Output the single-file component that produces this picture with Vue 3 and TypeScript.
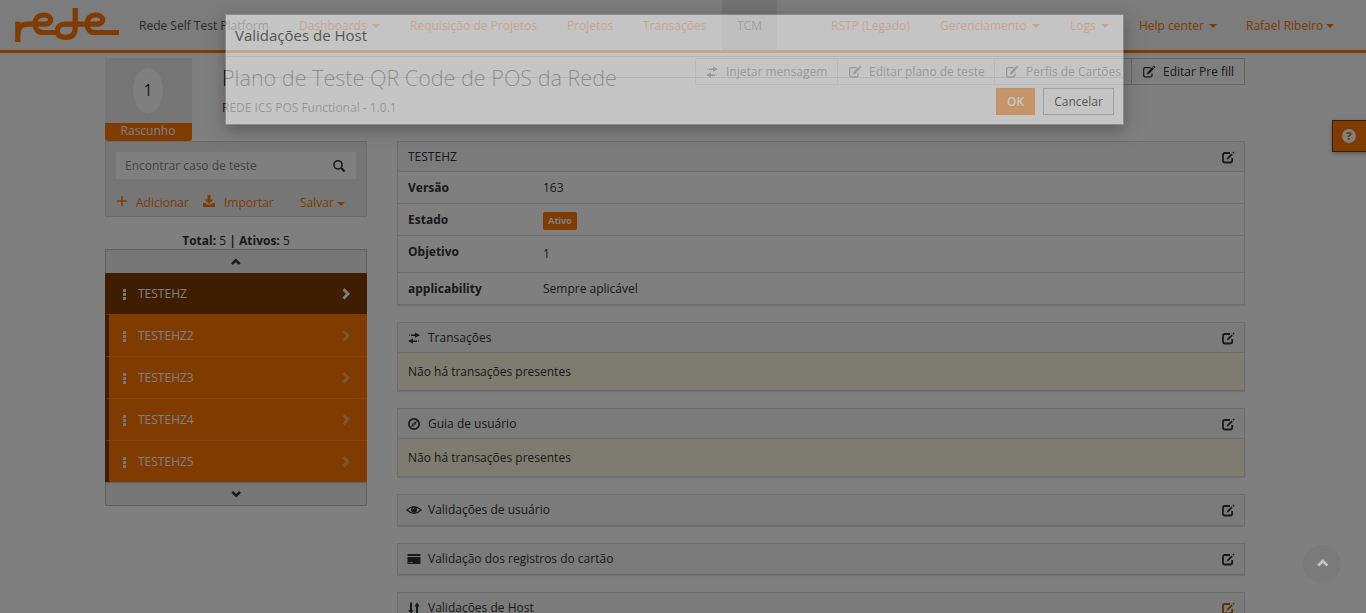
<script setup lang="ts">
interface NavItem { label: string; cls: string; caret?: boolean }
const nav: NavItem[] = [
  { label: 'Dashboards', cls: 'n-dash', caret: true },
  { label: 'Requisição de Projetos', cls: 'n-req' },
  { label: 'Projetos', cls: 'n-proj' },
  { label: 'Transações', cls: 'n-trans' },
  { label: 'TCM', cls: 'n-tcm active' },
  { label: 'RSTP (Legado)', cls: 'n-rstp' },
  { label: 'Gerenciamento', cls: 'n-ger', caret: true },
  { label: 'Logs', cls: 'n-logs', caret: true },
  { label: 'Help center', cls: 'n-help', caret: true },
  { label: 'Rafael Ribeiro', cls: 'n-user', caret: true },
]
const cases: string[] = ['TESTEHZ', 'TESTEHZ2', 'TESTEHZ3', 'TESTEHZ4', 'TESTEHZ5']
const actions: string[] = ['Injetar mensagem', 'Editar plano de teste', 'Perfis de Cartões', 'Editar Pre fill']
interface Section { title: string; icon: string; empty?: string; hot?: boolean }
const sections: Section[] = [
  { title: 'Transações', icon: 'transfer', empty: 'Não há transações presentes' },
  { title: 'Guia de usuário', icon: 'compass', empty: 'Não há transações presentes' },
  { title: 'Validações de usuário', icon: 'eye' },
  { title: 'Validação dos registros do cartão', icon: 'card' },
  { title: 'Validações de Host', icon: 'sort', hot: true },
]
</script>

<template>
  <div class="screen">
    <svg class="defs" width="0" height="0" aria-hidden="true">
      <symbol id="i-edit" viewBox="0 0 14 14">
        <path d="M8.500 2.600H3Q1.700 2.600 1.700 4v6.400q0 1.400 1.300 1.400h5.600q1.400 0 1.400-1.400V8.400" fill="none" stroke="currentColor" stroke-width="1.200" />
        <path d="M5 9.400l.6-2.400L10.300 2.100l1.700 1.700L7.300 8.700zM10.900 1.500l.7-.7q.4-.3.8 0l.9.9q.3.4 0 .8l-.7.700z" fill="currentColor" />
      </symbol>
      <symbol id="i-check" viewBox="0 0 14 14">
        <path d="M9 2H4Q2 2 2 4v5.500q0 2 2 2h5.200q2 0 2-2V7" fill="none" stroke="currentColor" stroke-width="1.800" />
        <path d="M5.500 8.700L6.500 6.200 10.500 2.400l1.300 1.400L8 7.600zM11.400 1.500l.9-.9 1.300 1.300-.9.900z" fill="currentColor" />
      </symbol>
      <symbol id="i-transfer" viewBox="0 0 14 14">
        <path d="M2 3.600h1.200v1H2zM4 3.500h4V1.600l5 2.600-5 2.600V5H4zM12 9.600h-1.200v1H12zM10 9.500H6V7.400L1 10l5 2.600v-1.700h4z" fill="currentColor" />
      </symbol>
      <symbol id="i-compass" viewBox="0 0 14 14">
        <circle cx="7" cy="7" r="5.200" fill="none" stroke="currentColor" stroke-width="1.700" />
        <path d="M10 4L8.100 8.100 4 10l1.900-4.100zM7 6.200a.8.8 0 1 0 0 1.600.8.8 0 0 0 0-1.600z" fill="currentColor" fill-rule="evenodd" />
      </symbol>
      <symbol id="i-eye" viewBox="0 0 16 14">
        <path d="M1 7Q8 .2 15 7 8 13.800 1 7z" fill="none" stroke="currentColor" stroke-width="1.300" />
        <circle cx="8" cy="6.800" r="3" fill="currentColor" />
        <path d="M6.700 6.500Q6.900 5.200 8 5" fill="none" stroke="#f8f8f8" stroke-width=".8" />
      </symbol>
      <symbol id="i-card" viewBox="0 0 14 14">
        <path d="M.5 2h13v2H.5zM.5 5h13v7H.5z" fill="currentColor" />
        <path d="M1.500 10.500h1M3.500 10.500h2" stroke="#f8f8f8" stroke-width=".9" />
      </symbol>
      <symbol id="i-sort" viewBox="0 0 14 14">
        <path d="M3 1.500h2V9h1.700L4 12.500 1.200 9H3zM9 12.500h2v-7h1.800L10 1.500 7.300 5.500H9z" fill="currentColor" />
      </symbol>
      <symbol id="i-search" viewBox="0 0 14 14">
        <circle cx="6" cy="5.800" r="4.100" fill="none" stroke="currentColor" stroke-width="1.500" />
        <path d="M9 8.800l3.600 3.700" stroke="currentColor" stroke-width="2.200" />
      </symbol>
      <symbol id="i-save" viewBox="0 0 14 14">
        <path d="M5.500 1h3v4.500h2.800L7 9.800 2.700 5.500h2.800zM1 9h2.600L5 10.500h4L10.400 9H13v4H1z" fill="currentColor" />
      </symbol>
      <symbol id="i-chevron" viewBox="0 0 14 14">
        <path d="M4.500 2.200L9 6.800l-4.500 4.600" fill="none" stroke="currentColor" stroke-width="2.900" />
      </symbol>
    </svg>

    <header class="navbar">
      <svg class="logo" width="124" height="50" viewBox="0 0 124 50" role="img" aria-label="rede">
        <g fill="none" stroke="#ff7600" stroke-width="5.200">
          <path d="M17.800 42V21.800M17.800 38C17.800 28 20 24.200 28 24.200H45C53 24.200 52.500 15 44 15C38 15 35 19 35 24C35 29 38 32.500 43 32.500H57" />
          <path d="M75.200 8V28C75.200 34 72 37.300 66 37.300C60 37.300 57.300 35 57.300 31C57.300 27 60 24.200 65 24.200H97C105 24.200 104.500 15 96 15C90 15 87 19 87 24C87 29 90 32.500 95 32.500H119" />
        </g>
      </svg>
      <span class="brand">Rede Self Test Platform</span>
      <nav class="links">
        <a v-for="n in nav" :key="n.label" :class="['link', n.cls]">{{ n.label }}<i v-if="n.caret" class="caret"></i></a>
      </nav>
    </header>

    <main class="page">
      <section class="heading">
        <div class="status">
          <div class="tile"><span class="num">1</span></div>
          <div class="draft">Rascunho</div>
        </div>
        <div class="titles">
          <h1>Plano de Teste QR Code de POS da Rede</h1>
          <p>REDE ICS POS Functional - 1.0.1</p>
        </div>
        <div class="actions">
          <button v-for="(a, i) in actions" :key="a" :class="'a' + i">
            <svg class="ic"><use :href="i === 0 ? '#i-transfer' : '#i-edit'" /></svg>{{ a }}
          </button>
        </div>
      </section>

      <div class="columns">
        <aside>
          <div class="tools">
            <div class="search"><span>Encontrar caso de teste</span><svg class="ic"><use href="#i-search" /></svg></div>
            <div class="ops">
              <svg class="plus" width="10" height="10" viewBox="0 0 10 10"><path d="M5 0v10M0 5h10" stroke="currentColor" stroke-width="1.400" /></svg>
              <a class="add">Adicionar</a>
              <svg class="ic"><use href="#i-save" /></svg>
              <a class="imp">Importar</a>
              <a class="sav">Salvar<i class="caret"></i></a>
            </div>
          </div>
          <p class="total"><b>Total:</b> 5 <b>|</b> <b>Ativos:</b> 5</p>
          <div class="bar"><svg class="ic up"><use href="#i-chevron" /></svg></div>
          <ul>
            <li v-for="(c, i) in cases" :key="c" :class="{ current: i === 0 }">
              <span class="dots"><i></i><i></i><i></i></span>{{ c }}<svg class="ic go"><use href="#i-chevron" /></svg>
            </li>
          </ul>
          <div class="bar last"><svg class="ic down"><use href="#i-chevron" /></svg></div>
        </aside>

        <div class="content">
          <article class="panel">
            <h2><span>TESTEHZ</span><svg class="ic chk"><use href="#i-check" /></svg></h2>
            <dl>
              <div><dt>Versão</dt><dd>163</dd></div>
              <div><dt>Estado</dt><dd><span class="label">Ativo</span></dd></div>
              <div class="tall"><dt>Objetivo</dt><dd>1</dd></div>
              <div><dt>applicability</dt><dd>Sempre aplicável</dd></div>
            </dl>
          </article>
          <article v-for="s in sections" :key="s.title" :class="['panel', { closed: !s.empty }]">
            <h2>
              <svg :class="['ic', s.icon]"><use :href="'#i-' + s.icon" /></svg>
              <span>{{ s.title }}</span>
              <svg :class="['ic', 'chk', { hot: s.hot }]"><use href="#i-check" /></svg>
            </h2>
            <p v-if="s.empty" class="empty">{{ s.empty }}</p>
          </article>
        </div>
      </div>
    </main>

    <div class="help"><span>?</span></div>

    <div class="backdrop"></div>
    <div class="to-top"><svg class="ic up"><use href="#i-chevron" /></svg></div>
    <div class="modal" role="dialog">
      <div class="m-head">Validações de Host</div>
      <div class="m-body"></div>
      <div class="m-foot"><button class="ok">OK</button><button class="cancel">Cancelar</button></div>
    </div>
  </div>
</template>

<style>
html, body { margin: 0; overflow: hidden; }
</style>

<style scoped>
* { box-sizing: border-box; }
.screen { position: relative; height: 613px; overflow: hidden; background: #fff; color: #333; font: 12px/18px "Open Sans", sans-serif; }
.defs { position: absolute; }
.ic { width: 14px; height: 14px; flex: none; display: block; }
h1, h2, p, dl, dd, ul { margin: 0; padding: 0; font-weight: 400; }
button { font: inherit; color: inherit; background: none; margin: 0; padding: 0; }
.caret { display: inline-block; border: 4px solid transparent; border-top-color: currentColor; border-bottom: 0; vertical-align: middle; margin: -1px 0 0 5px; }

.navbar { height: 53px; display: flex; background: #f8f8f8; border-bottom: 3px solid #ff7600; }
.logo { flex: none; }
.brand { width: 160px; padding-left: 15px; line-height: 51px; color: #555; white-space: nowrap; }
.links { display: flex; }
.link { color: #ff7600; line-height: 51px; height: 50px; padding-left: 15px; white-space: nowrap; flex: none; }
.n-dash { width: 111px; }
.n-req { width: 157px; }
.n-proj { width: 76px; }
.n-trans { width: 94px; }
.n-tcm { width: 55px; margin-right: 39px; }
.active { color: #555; background: #e4e4e4; }
.n-rstp { width: 109px; }
.n-ger { width: 130px; }
.n-logs { width: 69px; }
.n-help { width: 107px; }
.n-user .caret { margin-left: 3px; }

.page { width: 1140px; margin: 5px 0 0 105px; }
.heading { display: flex; height: 83px; }
.status { width: 87px; flex: none; }
.tile { height: 65px; background: #ececec; display: flex; align-items: center; justify-content: center; }
.num { width: 30px; height: 45px; border-radius: 50%; background: #fff; font-size: 16px; line-height: 45px; text-align: center; margin-right: 1px; }
.draft { height: 18px; background: #ff7600; color: #fff; text-align: center; line-height: 16px; border-radius: 0 0 3px 3px; padding-right: 1px; }
.titles { padding-left: 30px; width: 503px; flex: none; }
h1 { font-size: 21.550px; line-height: 24px; font-weight: 300; margin-top: 8px; white-space: nowrap; color: #000; }
.titles p { margin-top: 9px; line-height: 18px; }
.actions { display: flex; height: 27px; width: 550px; flex: none; }
.actions button { border: 1px solid #ccc; border-left-width: 0; display: flex; align-items: center; padding-left: 11px; white-space: nowrap; }
.actions .ic { margin: 0 7px 0 -1px; }
.actions .a0 { border-left-width: 1px; width: 143px; padding-left: 10px; }
.a1 { width: 157px; }
.a2 { width: 137px; }
.a3 { width: 113px; }

.columns { display: flex; gap: 30px; align-items: flex-start; }
aside { width: 262px; flex: none; }
.tools { height: 76px; border: 1px solid #d4d4d4; background: #ededed; padding: 10px; }
.search { height: 27px; background: #fff; display: flex; align-items: center; justify-content: space-between; padding: 0 10px 0 9px; color: #888; }
.search .ic { color: #333; }
.ops { display: flex; align-items: center; margin-top: 15px; color: #ff7600; height: 18px; }
.plus { margin: -5px 9px 0 1px; }
.add { width: 66px; }
.imp { margin-left: 8px; width: 76px; }
.ops .ic { margin-top: -4px; }
.sav .caret { margin: 0 0 0 3px; }
.total { text-align: center; margin-top: 15px; line-height: 17px; height: 17px; }
.bar { height: 24px; border: 1px solid #bebebe; border-bottom: 0; background: #ededed; display: flex; align-items: center; justify-content: center; }
.bar.last { border: 1px solid #bebebe; height: 24px; margin-top: -1px; }
.bar .ic { width: 12px; height: 12px; }
.up { transform: rotate(-90deg); }
.down { transform: rotate(90deg); }
ul { list-style: none; }
li { height: 42px; background: #ff7600; color: #fff; border-left: 4px solid #7f3b00; border-bottom: 1px solid #ff8d2a; display: flex; align-items: center; padding: 0 14px 0 14px; }
li.current { background: #7f3b00; border-bottom-color: #ff7600; }
.dots { display: flex; flex-direction: column; gap: 1px; width: 15px; margin-top: 1px; }
.dots i { width: 3px; height: 3px; background: #eee; }
.go { margin-left: auto; opacity: .4; }
.current .go { opacity: 1; }

.content { width: 848px; }
.panel { border: 1px solid #ddd; margin-bottom: 17px; box-shadow: 0 1px 1px rgba(0,0,0,.1); }
.panel h2 { height: 30px; background: #f7f7f7; border-bottom: 1px solid #ddd; display: flex; align-items: center; padding: 0 9px 0 10px; font-size: 12px; line-height: 18px; }
.panel h2 span { margin-right: auto; }
.panel h2 .ic:first-child { margin: 0 7px 0 -1px; }
.panel h2 .ic.eye { width: 16px; margin-left: -2px; margin-right: 6px; }
.panel h2 .ic.chk { margin-top: 2px; }
.hot { color: #b86000; }
.panel.closed { height: 32px; border-bottom: 0; }
.closed h2 { height: 31px; }
.empty { height: 37px; line-height: 37px; padding-left: 10px; background: #fcf8e3; }
dl > div { display: flex; height: 32px; border-bottom: 1px solid #ddd; padding: 7px 10px 0; }
dl > div:last-child { border-bottom: 0; height: 31px; }
dl > .tall { height: 37px; }
.tall dd { padding-top: 2px; }
dt { width: 135px; font-weight: 700; }
.label { display: block; margin-top: 1px; background: #ff7600; color: #fff; border-radius: 2px; width: 34px; height: 18px; font-size: 9px; line-height: 18px; font-weight: 700; text-align: center; }

.help { position: absolute; left: 1332px; top: 120px; width: 40px; height: 32px; background: #ff7600; border: 1px solid #7f3b00; box-shadow: 0 2px 5px rgba(0,0,0,.3); padding: 8px 0 0 9px; }
.help span { display: block; width: 14px; height: 14px; border-radius: 50%; background: #fff; color: #ff7600; font: 800 11px/14px "Open Sans", sans-serif; text-align: center; }
.backdrop { position: absolute; inset: 0; background: rgba(0,0,0,.5); }
.to-top { position: absolute; left: 1303px; top: 545px; width: 38px; height: 38px; border-radius: 50%; background: #7a7a7a; color: #c4c4c4; display: flex; align-items: center; justify-content: center; }
.to-top .ic { margin: -2px 0 0 1px; }
.modal { position: absolute; left: 225px; top: 14px; width: 899px; height: 111px; background: #fff; border: 1px solid #999; box-shadow: 0 5px 15px rgba(0,0,0,.5); opacity: .55; color: #333; }
.m-head { height: 42px; padding: 10px 9px 0; font-size: 15px; line-height: 20px; border-bottom: 1px solid #e5e5e5; }
.m-body { height: 21px; border-bottom: 1px solid #e5e5e5; }
.m-foot { display: flex; justify-content: flex-end; gap: 8px; padding: 10px 9px 0; }
.m-foot button { height: 27px; }
.m-foot .ok { width: 39px; background: #ffa858; border: 1px solid #f5a058; color: #fff; font-weight: 600; }
.m-foot .cancel { width: 71px; border: 1px solid #bbb; }
</style>
